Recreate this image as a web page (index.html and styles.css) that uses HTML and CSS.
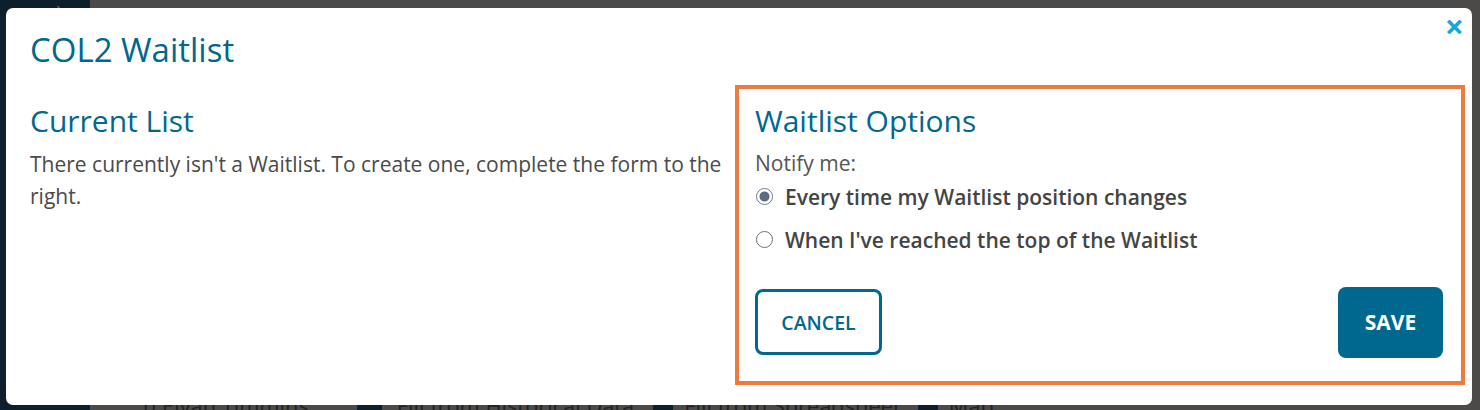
FILE: index.html
```html
<!DOCTYPE html>
<html lang="en">
<head>
<meta charset="utf-8">
<title>COL2 Waitlist</title>
<link rel="stylesheet" href="styles.css">
</head>
<body>
<div class="page">
  <aside class="sidebar">
    <span class="chev">&#8250;</span>
  </aside>
  <main class="main">
    <div class="toolbar">
      <span class="tb-item tb-name">h Elvan Timmins</span>
      <span class="tb-item tb-hist"><span class="tb-icon tb-icon-a"></span>Fill from Historical Data</span>
      <span class="tb-item tb-sheet"><span class="tb-icon"></span>Fill from Spreadsheet</span>
      <span class="tb-item"><span class="tb-icon"></span>Map</span>
    </div>
  </main>
</div>

<div class="modal" role="dialog" aria-labelledby="modal-title">
  <button class="close" aria-label="Close">
    <svg width="15" height="14" viewBox="0 0 15 14"><path d="M2.5 2 L12.5 12 M12.5 2 L2.5 12" stroke="#1ba6d8" stroke-width="3.6" stroke-linecap="square" fill="none"/></svg>
  </button>
  <h1 class="modal-title" id="modal-title">COL2 Waitlist</h1>
  <div class="modal-body">
    <section class="col-left">
      <h2 class="section-title">Current List</h2>
      <p class="text">There currently isn't a Waitlist. To create one, complete the form to the right.</p>
    </section>
    <section class="col-right">
      <h2 class="section-title">Waitlist Options</h2>
      <p class="notify">Notify me:</p>
      <label class="option"><input type="radio" name="notify" checked><span>Every time my Waitlist position changes</span></label>
      <label class="option"><input type="radio" name="notify"><span>When I've reached the top of the Waitlist</span></label>
      <div class="actions">
        <button class="btn btn-cancel">CANCEL</button>
        <button class="btn btn-save">SAVE</button>
      </div>
    </section>
  </div>
</div>
</body>
</html>
```

FILE: styles.css
```css
* { box-sizing: border-box; }
html, body { margin: 0; padding: 0; }
body {
  width: 1480px;
  height: 410px;
  overflow: hidden;
  font-family: "Open Sans", "Liberation Sans", sans-serif;
  background: #4c4a48;
}
.page {
  display: flex;
  height: 410px;
}
.sidebar {
  width: 90px;
  flex: none;
  background: #0c1f2a;
  position: relative;
}
.chev {
  position: absolute;
  left: 56px;
  top: -8px;
  color: #5b6770;
  font-size: 22px;
}
.main {
  flex: 1;
  padding-top: 393px;
  padding-left: 53px;
}
.toolbar {
  display: flex;
  font-size: 21.8px;
  color: #222;
  line-height: 26px;
  white-space: nowrap;
}
.tb-item { display: flex; align-items: center; gap: 11px; }
.tb-icon { width: 20px; height: 18px; background: #0c1f2a; display: inline-block; }
.tb-icon-a { width: 25px; margin-right: 4px; }
.tb-name { margin-right: 48px; }
.tb-hist { margin-right: 19px; }
.tb-sheet { margin-right: 17px; }

.modal {
  position: absolute;
  left: 6px;
  top: 8px;
  width: 1466px;
  height: 397px;
  background: #fff;
  border-radius: 7px;
  padding: 22px 7px 0 24px;
}
.close {
  position: absolute;
  right: 10px;
  top: 12px;
  border: 0;
  background: none;
  padding: 0;
  width: 15px;
  height: 14px;
  display: flex;
}
.modal-title {
  margin: 0 0 15px;
  font-size: 33px;
  font-weight: 400;
  line-height: 1.2;
  color: #00678f;
}
.modal-body {
  display: grid;
  grid-template-columns: 1fr 730px;
  gap: 10px;
}
.section-title {
  margin: 0 0 9px;
  font-size: 30px;
  font-weight: 400;
  line-height: 36px;
  color: #00678f;
}
.col-left { padding-top: 18px; }
.text {
  margin: 2px 0 0;
  font-size: 21px;
  line-height: 32px;
  color: #4a4a4a;
}
.col-right {
  border: 4px solid #f07841;
  height: 300px;
  padding: 14px 18px 0 16px;
  display: flex;
  flex-direction: column;
}
.notify {
  margin: 0 0 5px;
  font-size: 21px;
  line-height: 31px;
  color: #555;
}
.option {
  display: flex;
  align-items: center;
  gap: 12px;
  font-size: 21px;
  font-weight: 600;
  color: #444;
  line-height: 26px;
  margin-bottom: 17px;
}
.option input {
  appearance: none;
  -webkit-appearance: none;
  margin: 0 0 0 1px;
  width: 17px;
  height: 17px;
  border: 1px solid #707070;
  border-radius: 50%;
  background: #fff;
  flex: none;
}
.option input:checked {
  border-color: #6b7a94;
  background: radial-gradient(circle, #5c6a86 0 4.6px, #fff 5.4px 6px);
}
.actions {
  margin-top: 17px;
  display: flex;
  justify-content: space-between;
  align-items: center;
}
.btn {
  font-family: "Open Sans", "Liberation Sans", sans-serif;
  font-weight: 600;
  border-radius: 8px;
  cursor: pointer;
}
.btn-cancel {
  width: 127px;
  height: 66px;
  border: 3px solid #00678f;
  background: #fff;
  color: #00678f;
  font-size: 19.5px;
}
.btn-save {
  width: 105px;
  height: 71px;
  border: 0;
  background: #00678f;
  color: #fff;
  font-size: 21px;
  font-weight: 700;
}
```
